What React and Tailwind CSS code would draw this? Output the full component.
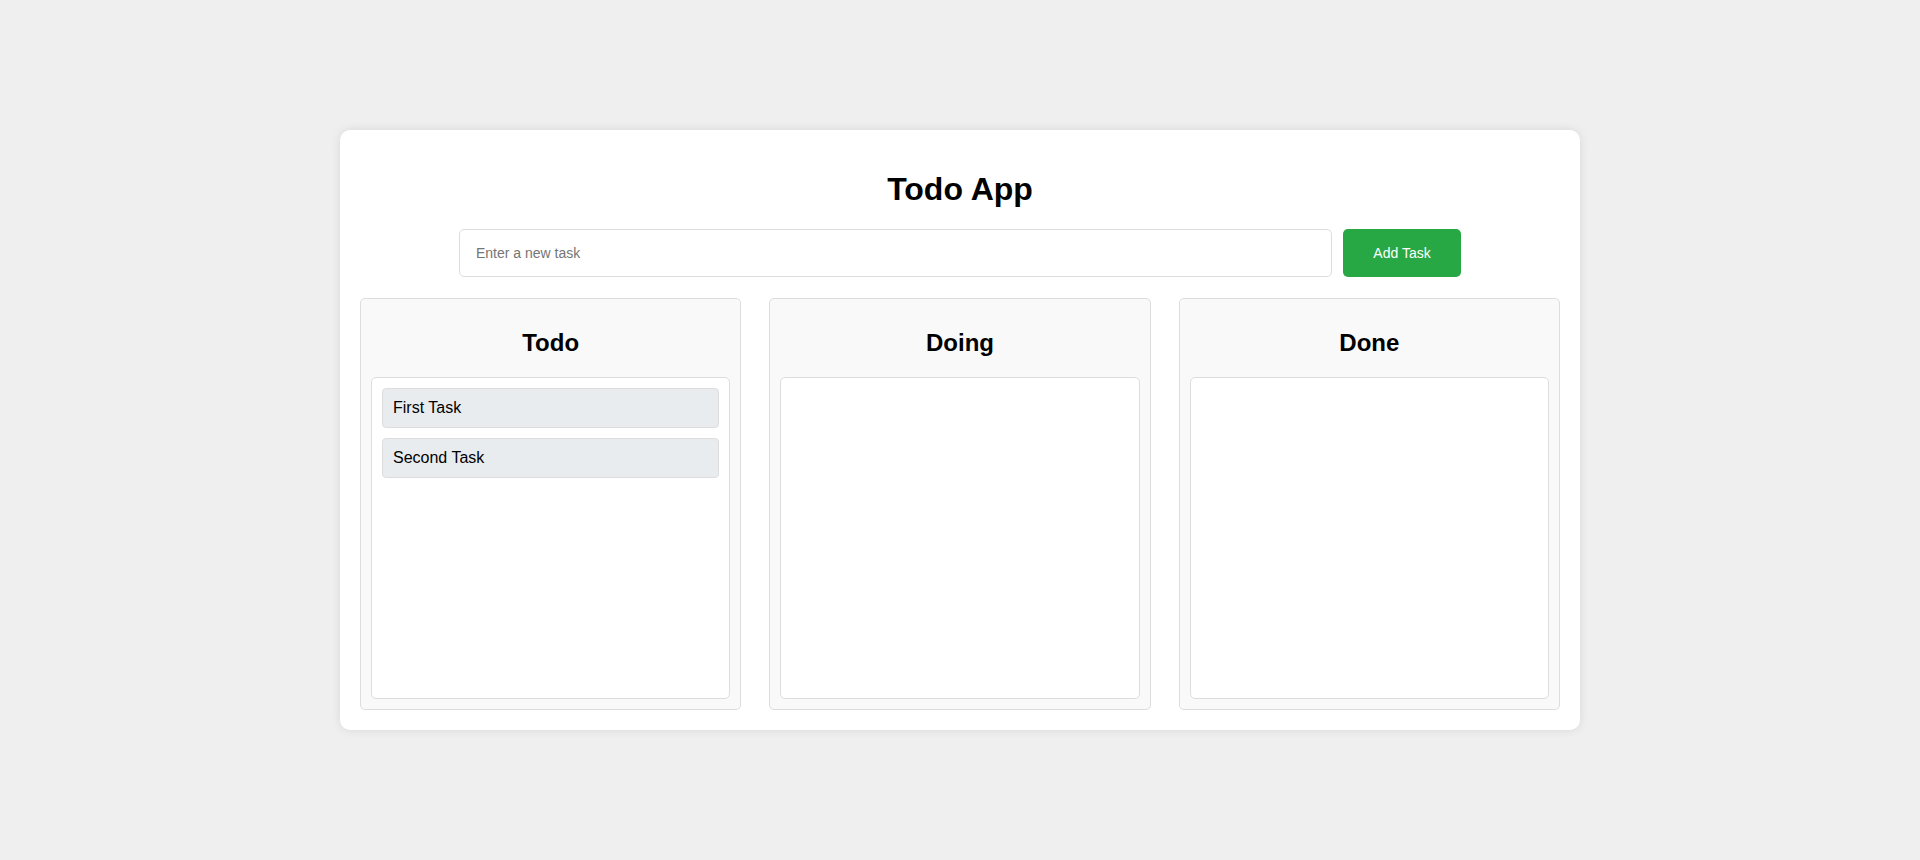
import React, { useState } from 'react'

const COLUMNS = [
    { id: 'todo', title: 'Todo' },
    { id: 'doing', title: 'Doing' },
    { id: 'done', title: 'Done' },
];

const INITIAL_TASKS = [
    { id: 1, text: 'First Task', status: 'todo' },
    { id: 2, text: 'Second Task', status: 'todo' },
];

const Column = ({ title, tasks }) => (
    <div className="flex flex-col h-[412px] bg-[#f9f9f9] border border-[#ddd] rounded-[5px] p-[10px]">
        <h2 className="my-5 text-center text-[24px] leading-[27.6px] font-bold text-black">{title}</h2>
        <div className="flex-1 bg-white border border-[#ddd] rounded-[5px] p-[10px] flex flex-col gap-[10px]">
            {tasks.map(t => (
                <div key={t.id} className="bg-[#e9ecef] border border-[#ddd] rounded-[4px] px-[10px] py-[10px] text-[16px] leading-[18px] text-black">
                    {t.text}
                </div>
            ))}
        </div>
    </div>
)

export default function App() {
    const [tasks, setTasks] = useState(INITIAL_TASKS);
    const [value, setValue] = useState('');

    const addTask = () => {
        if (!value.trim()) return;
        setTasks([...tasks, { id: Date.now(), text: value.trim(), status: 'todo' }]);
        setValue('');
    };

    return (
        <div className="h-[860px] overflow-hidden bg-[#efefef] flex justify-center pt-[130px] font-['Liberation_Sans',Arial,sans-serif]">
            <div className="w-[1240px] h-[600px] bg-white rounded-[10px] shadow-[0_0_10px_rgba(0,0,0,0.1)] p-5">
                <h1 className="my-[21px] text-center text-[32px] leading-[37px] font-bold text-black">Todo App</h1>

                {/* input row */}
                <div className="w-[1002px] mx-auto flex gap-[11px] h-[48px]">
                    <input
                        value={value}
                        onChange={e => setValue(e.target.value)}
                        placeholder="Enter a new task"
                        className="flex-1 h-full border border-[#ddd] rounded-[5px] px-4 text-[14px] text-black placeholder:text-[#757575] outline-none bg-white"
                    />
                    <button
                        onClick={addTask}
                        className="w-[118px] h-full bg-[#28a745] text-white text-[14px] rounded-[5px]"
                    >
                        Add Task
                    </button>
                </div>

                <div className="grid grid-cols-3 gap-[28px] mt-[21px]">
                    {COLUMNS.map(c => (
                        <Column key={c.id} title={c.title} tasks={tasks.filter(t => t.status === c.id)} />
                    ))}
                </div>
            </div>
        </div>
    )
}
